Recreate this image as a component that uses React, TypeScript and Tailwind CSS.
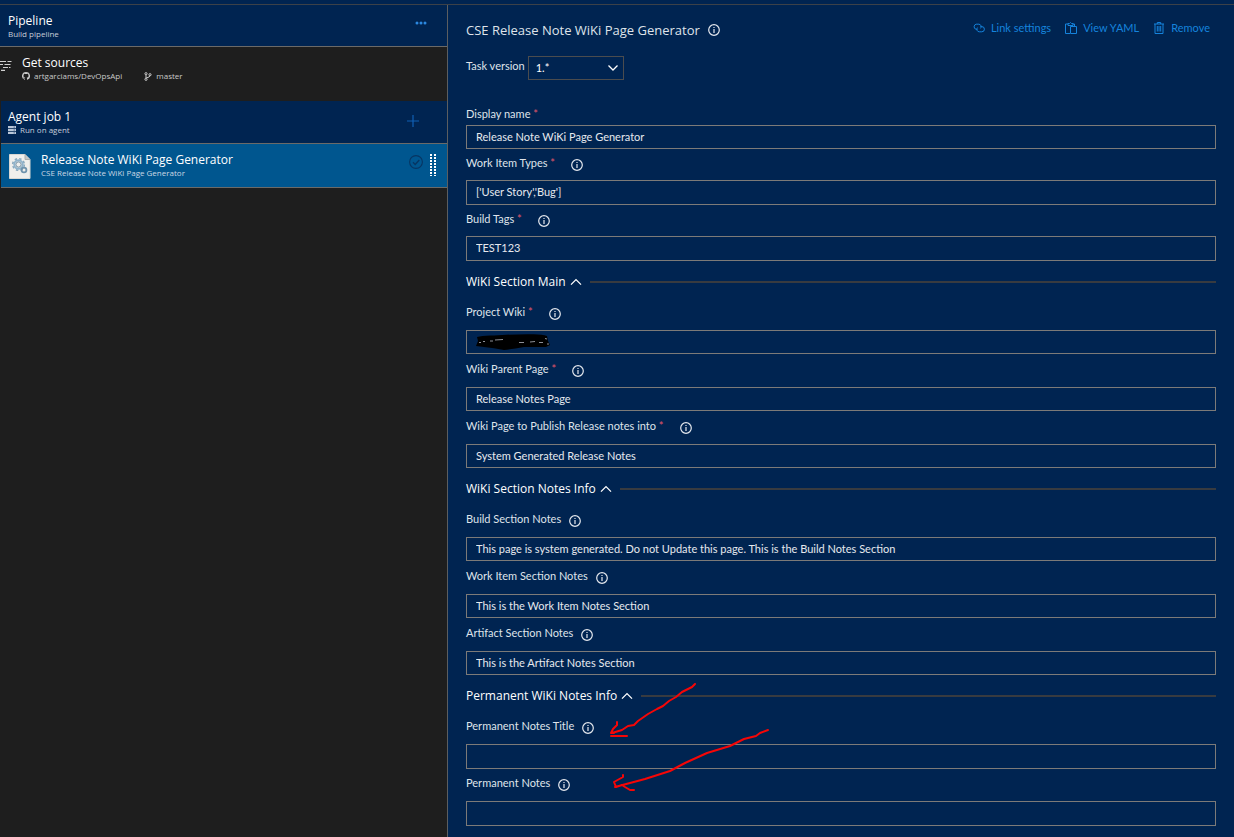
import { useId, useState, type ReactNode } from 'react';

function InfoIcon() {
  return (
    <svg viewBox="0 0 12 12" className="size-3 shrink-0 text-[#e4e8ee]" fill="none" stroke="currentColor" aria-hidden="true">
      <circle cx="6" cy="6" r="5.3" strokeWidth="1.2" />
      <path d="M6 5v4M6 3v1.1" strokeWidth="1.2" />
    </svg>
  );
}

function InfoButton({ label }: { label: string }) {
  return (
    <button type="button" aria-label={label} className="flex size-3 shrink-0">
      <InfoIcon />
    </button>
  );
}

type FieldProps = {
  label: string;
  value: string;
  required?: boolean;
  info?: boolean;
  rowClass?: string;
  inputClass?: string;
  children?: ReactNode;
};

function Field({
  label,
  value,
  required = false,
  info = true,
  rowClass = 'h-[33px]',
  inputClass = 'h-6',
  children,
}: FieldProps) {
  const id = useId();
  const [text, setText] = useState(value);
  return (
    <div>
      <div className={`flex items-center ${required ? 'gap-4' : 'gap-2'} ${rowClass}`}>
        <label htmlFor={id} className="pb-1 text-[11px] leading-4 text-[#dfe3ea]">
          {label}
          {required && <span className="text-[#e0566a]"> *</span>}
        </label>
        {info && <InfoButton label={`About ${label}`} />}
      </div>
      <div className="relative">
        <input
          id={id}
          type="text"
          value={text}
          onChange={(e) => setText(e.target.value)}
          className={`block w-full border border-[#7c7a78] bg-transparent px-[9px] pb-0.5 text-[11px] text-[#e6e9ee] outline-none focus:border-[#0078d4] ${inputClass}`}
        />
        {children}
      </div>
    </div>
  );
}

function Section({ title, children }: { title: string; children: ReactNode }) {
  const [open, setOpen] = useState(true);
  return (
    <section>
      <div className="flex h-9 items-center gap-2 pt-1.5">
        <button
          type="button"
          aria-expanded={open}
          onClick={() => setOpen(!open)}
          className="flex items-center gap-1 font-['Open_Sans','Noto_Sans',sans-serif] text-xs leading-4 text-white"
        >
          {title}
          <svg viewBox="0 0 12 12" className={`size-3 ${open ? '' : 'rotate-180'}`} fill="none" stroke="currentColor" strokeWidth="1.3" aria-hidden="true">
            <path d="M1 8.6 6 3.6l5 5" />
          </svg>
        </button>
        <div className="h-0.5 flex-1 bg-[#383b40]" />
      </div>
      {open && children}
    </section>
  );
}

function Redaction() {
  return (
    <svg viewBox="0 0 76 18" className="pointer-events-none absolute top-[3px] left-2 h-[18px] w-[76px]" aria-hidden="true">
      <path d="M3 4Q9 2 20 2.500Q40 1 58 1.200Q68 1 73 3L74 8L76 12L72 14Q60 14 50 14Q38 16 30 17Q20 15 10 14L2 13L4 8Z" fill="#000" />
      <path d="M5 9.500h2m2-1h2m5-.5h3m2-1 8-.5m16 3h5m6-.5 5-.5m4 1h4m2-4 2 .5m0 5h2" stroke="#8d8f96" strokeWidth="1" fill="none" />
    </svg>
  );
}

function Annotations() {
  return (
    <svg viewBox="0 0 170 115" className="pointer-events-none absolute top-2 left-36 h-[115px] w-[170px]" fill="none" stroke="#f60606" strokeWidth="2" strokeLinecap="round" strokeLinejoin="round" aria-hidden="true">
      <path d="M85 1 82 4 72 9 66 14 59 18 53 23 47 26 38 31 28 38 24 42 18 43 12 47 2 50M7 39V42L3 46 1 50 4 50M1 53H17" />
      <path d="M158 47 150 50 146 53 134 56 120 63 97 70 75 80 60 88 35 96 5 104M13 92V94L4 99 6 104 12 102 15 104 20 107H24" />
    </svg>
  );
}

function Sidebar() {
  return (
    <aside className="w-[447px] shrink-0 bg-[#1e1e1e] font-['Open_Sans','Noto_Sans',sans-serif]">
      <header className="flex h-[42px] items-start justify-between border-b border-[#6b6a68] bg-[#002451] pt-2 pr-[19px] pl-2">
        <div>
          <h1 className="text-xs leading-4 text-white">Pipeline</h1>
          <p className="text-[8px] leading-[10px] text-[#c7ced9]">Build pipeline</p>
        </div>
        <button type="button" aria-label="More actions" className="flex h-5 items-center text-[#2b88e0]">
          <svg viewBox="0 0 14 4" className="h-1 w-3.5" fill="currentColor" aria-hidden="true">
            <circle cx="3" cy="2" r="1.500" />
            <circle cx="7" cy="2" r="1.500" />
            <circle cx="11" cy="2" r="1.500" />
          </svg>
        </button>
      </header>

      <div className="flex h-[54px] items-start pt-2">
        <svg viewBox="0 0 12 12" className="mt-1 mr-2.5 size-3 shrink-0 text-[#d0d0d0]" stroke="currentColor" strokeWidth="1.200" aria-hidden="true">
          <path d="M0 2.500h6M7.500 2.500h4M0 5.500h3M4.500 5.500h6M3 8.500h5M9 8.500h1.500M1 11.300h4" />
        </svg>
        <div>
          <h2 className="text-xs leading-4 text-white">Get sources</h2>
          <div className="flex items-center gap-[22px] text-[8px] leading-[10px] text-[#c9c9c9]">
            <span className="flex items-center gap-1">
              <svg viewBox="0 0 16 16" className="size-2" fill="currentColor" aria-hidden="true">
                <path d="M8 0a8 8 0 0 0-2.530 15.590c.4.070.55-.17.55-.38v-1.490c-2.230.48-2.690-.95-2.690-.95-.36-.92-.89-1.170-.89-1.170-.73-.5.050-.49.050-.49.800.060 1.230.83 1.230.83.72 1.220 1.870.87 2.330.66.070-.52.280-.87.510-1.070-1.780-.2-3.640-.89-3.640-3.950 0-.87.310-1.590.82-2.150-.080-.2-.36-1.020.080-2.120 0 0 .67-.21 2.200.82a7.600 7.600 0 0 1 4 0c1.530-1.040 2.200-.82 2.200-.82.440 1.100.160 1.920.080 2.120.510.56.820 1.270.820 2.150 0 3.070-1.870 3.750-3.650 3.950.290.25.54.73.54 1.480v2.200c0 .21.150.46.55.38A8 8 0 0 0 8 0Z" />
              </svg>
              artgarciams/DevOpsApi
            </span>
            <span className="flex items-center gap-1">
              <svg viewBox="0 0 8 9" className="h-[9px] w-2" fill="none" stroke="currentColor" aria-hidden="true">
                <circle cx="2" cy="1.700" r="1.100" />
                <circle cx="2" cy="7.300" r="1.100" />
                <circle cx="6" cy="2.700" r="1.100" />
                <path d="M2 2.700v3.600M6 3.700Q6 5.300 2.300 5.800" />
              </svg>
              master
            </span>
          </div>
        </div>
      </div>

      <div className="ml-px flex h-[43px] items-start justify-between border-b border-[#6b6a68] bg-[#002451] pt-2 pr-7 pl-[7px]">
        <div>
          <h2 className="text-xs leading-4 text-white">Agent job 1</h2>
          <p className="flex items-center gap-1 text-[8px] leading-[10px] text-[#c7ced9]">
            <svg viewBox="0 0 8 8" className="size-2" aria-hidden="true">
              <path d="M0 0h8v2.200H0zM0 2.900h8v2.200H0zM0 5.800h8V8H0z" fill="#b9c6d8" />
              <path d="M5.500 1.100H7M5.500 4H7M5.500 6.900H7" stroke="#35527c" strokeWidth=".8" />
            </svg>
            Run on agent
          </p>
        </div>
        <button type="button" aria-label="Add a task" className="mt-1.5 text-[#0f5fb4]">
          <svg viewBox="0 0 12 12" className="size-3" stroke="currentColor" strokeWidth="1.200" aria-hidden="true">
            <path d="M6 0v12M0 6h12" />
          </svg>
        </button>
      </div>

      <div className="ml-px flex h-11 items-start border-b border-[#6b6a68] bg-[#00568f] pt-2 pr-[11px] pl-2">
        <svg viewBox="0 0 22 25" className="mt-0.5 h-[25px] w-[22px] shrink-0" fill="none" aria-hidden="true">
          <path d="M.5.500h15.500l5 5V24.500H.5Z" fill="#efefec" stroke="#d7d7d3" />
          <path d="M16 .5v5h5" fill="#c5c6c4" stroke="#aaaead" />
          <circle cx="9.500" cy="10.500" r="5.800" stroke="#8aa9bd" strokeWidth="1.600" strokeDasharray="2.400 2.155" />
          <circle cx="9.500" cy="10.500" r="4.200" stroke="#8fb3cb" strokeWidth="2" />
          <circle cx="9.500" cy="10.500" r="2.600" stroke="#5f7f95" strokeWidth=".8" />
          <circle cx="15" cy="16" r="2.400" stroke="#6f93ac" strokeWidth="1.800" />
        </svg>
        <div className="ml-[10px] flex-1">
          <h3 className="text-xs leading-4 text-white">Release Note WiKi Page Generator</h3>
          <p className="text-[8px] leading-[10px] text-[#cbd8e4]">CSE Release Note WiKi Page Generator</p>
        </div>
        <svg viewBox="0 0 14 14" className="mt-[3px] size-3.5 shrink-0 text-[#073562]" fill="none" stroke="currentColor" strokeWidth="1.100" aria-hidden="true">
          <circle cx="7" cy="7" r="6.400" />
          <path d="m4 7.300 2.200 2.100L10.300 5" strokeWidth="1.400" />
        </svg>
        <svg viewBox="0 0 6 22" className="mt-0.5 ml-[7px] h-[22px] w-1.5 shrink-0" stroke="#fff" strokeWidth="2" strokeDasharray="2 1" aria-hidden="true">
          <path d="M1 0v22M5 0v22" />
        </svg>
      </div>
    </aside>
  );
}

function TaskHeader() {
  return (
    <>
      <div className="flex h-6 items-center justify-between">
        <div className="flex items-center gap-2">
          <h2 className="font-['Open_Sans','Noto_Sans',sans-serif] text-[13px] leading-5 text-[#dfe3ea]">CSE Release Note WiKi Page Generator</h2>
          <InfoButton label="About this task" />
        </div>
        <nav className="flex items-center gap-3.5 pr-1.5 pb-1 text-[11px] leading-4 text-[#1583dc]">
          <a href="#link-settings" className="flex items-center gap-1.5">
            <svg viewBox="0 0 12 10" className="h-2.5 w-3" fill="none" stroke="currentColor" strokeWidth="1" aria-hidden="true">
              <path d="M4.300 6.300H3.200A2.600 2.600 0 0 1 3.200 1.200H5.800A2.500 2.500 0 0 1 7.500 5.400" />
              <path d="M7.500 3.600H8.800A2.600 2.600 0 0 1 8.800 8.800H6.300A2.500 2.500 0 0 1 4.500 4.600" />
            </svg>
            Link settings
          </a>
          <a href="#view-yaml" className="flex items-center gap-1.5">
            <svg viewBox="0 0 12 12" className="size-3" fill="none" stroke="currentColor" strokeWidth="1" aria-hidden="true">
              <path d="M5 11.500H.5V2H3M8 2h1.500v2M3 3.500V1.500h1.500l1-1 1 1H8v2ZM5.500 4.500h6v7h-6Z" />
            </svg>
            View YAML
          </a>
          <button type="button" className="flex items-center gap-1.5">
            <svg viewBox="0 0 12 12" className="size-3" fill="none" stroke="currentColor" strokeWidth="1" aria-hidden="true">
              <path d="M1 2h10M4.300 2V.5h3.400V2M2 2v9.500h8V2M4.300 4v5.500M6 4v5.500M7.700 4v5.500" />
            </svg>
            Remove
          </button>
        </nav>
      </div>

      <div className="mt-3.5 flex items-start gap-[3px]">
        <label htmlFor="task-version" className="pt-0.5 text-[11px] leading-4 text-[#dfe3ea]">Task version</label>
        <div className="relative">
          <select
            id="task-version"
            defaultValue="1"
            className="block h-6 w-24 appearance-none border border-[#4b4c4e] bg-[#002451] pl-[7px] text-[11px] text-white outline-none"
          >
            <option value="1">1.*</option>
          </select>
          <svg viewBox="0 0 10 6" className="pointer-events-none absolute inset-y-0 right-1.5 my-auto h-1.5 w-2.5" fill="none" stroke="#fff" strokeWidth="1.300" aria-hidden="true">
            <path d="m.5.500 4.500 4.500L9.500.5" />
          </svg>
        </div>
      </div>
    </>
  );
}

export default function App() {
  return (
    <div className="flex min-h-screen flex-col bg-[#002451] font-[Lato,'Open_Sans',sans-serif]">
      <div className="h-[5px] border-b border-[#3c4148]" />
      <div className="flex flex-1">
        <Sidebar />
        <main className="min-w-0 flex-1 border-l border-[#5c5e60] pt-[13px] pr-[18px] pl-[18px]">
          <TaskHeader />
          <form className="mt-[22px]" onSubmit={(e) => e.preventDefault()}>
            <Field label="Display name" value="Release Note WiKi Page Generator" required info={false} rowClass="h-[23px] pt-1" />
            <Field label="Work Item Types" value="['User Story','Bug']" required rowClass="h-[31px]" inputClass="h-[25px]" />
            <Field label="Build Tags" value="TEST123" required rowClass="h-[31px]" inputClass="h-[25px]" />
            <Section title="WiKi Section Main">
              <Field label="Project Wiki" value="" required>
                <Redaction />
              </Field>
              <Field label="Wiki Parent Page" value="Release Notes Page" required />
              <Field label="Wiki Page to Publish Release notes into" value="System Generated Release Notes" required />
            </Section>
            <Section title="WiKi Section Notes Info">
              <Field label="Build Section Notes" value="This page is system generated. Do not Update this page. This is the Build Notes Section" />
              <Field label="Work Item Section Notes" value="This is the Work Item Notes Section" />
              <Field label="Artifact Section Notes" value="This is the Artifact Notes Section" />
            </Section>
            <div className="relative">
              <Section title="Permanent WiKi Notes Info">
                <Field label="Permanent Notes Title" value="" inputClass="h-[25px]" />
                <Field label="Permanent Notes" value="" rowClass="h-8" inputClass="h-[25px]" />
              </Section>
              <Annotations />
            </div>
          </form>
        </main>
      </div>
    </div>
  );
}
